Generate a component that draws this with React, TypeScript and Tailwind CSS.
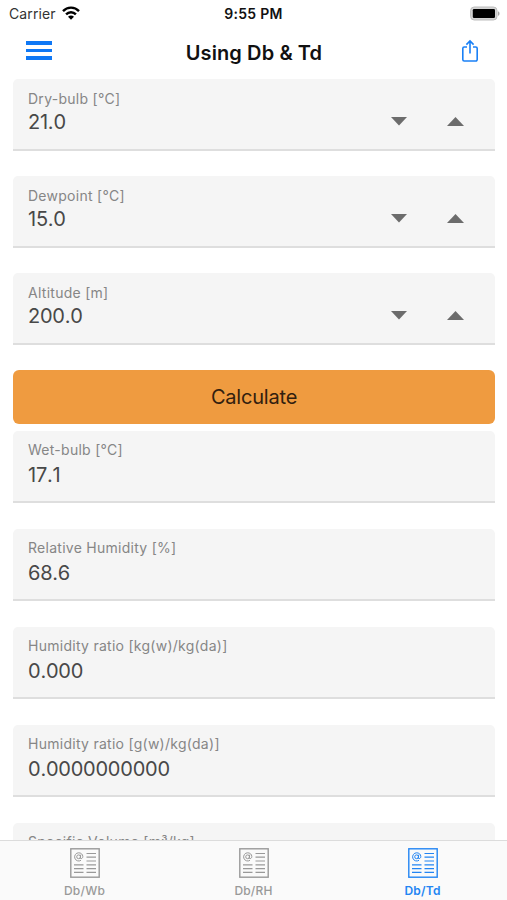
import { useState } from "react"
import clsx from "clsx"

const inputs = [
  { label: "Dry-bulb [°C]", value: 21 },
  { label: "Dewpoint [°C]", value: 15 },
  { label: "Altitude [m]", value: 200 },
]

const results = [
  { label: "Wet-bulb [°C]", value: "17.1" },
  { label: "Relative Humidity [%]", value: "68.6" },
  { label: "Humidity ratio [kg(w)/kg(da)]", value: "0.000" },
  { label: "Humidity ratio [g(w)/kg(da)]", value: "0.0000000000" },
  { label: "Specific Volume [m³/kg]", value: "" },
]

const tabs = ["Db/Wb", "Db/RH", "Db/Td"]

function StatusBar() {
  return (
    <div className="grid h-7 shrink-0 grid-cols-3 items-center pl-[9px] pr-[7px] text-[#111]">
      <div className="flex items-center gap-[6px]">
        <span className="text-[14px] leading-5 tracking-[0.1px] text-[#333]">Carrier</span>
        <svg width="18" height="14" viewBox="0 0 18 14" fill="none" stroke="#000" strokeWidth="2.4" className="-mt-[3px]">
          <path d="M1 5.1C5.4.5 12.6.5 17 5.1" />
          <path d="M4.1 8.4c2.7-2.9 7.1-2.9 9.8 0" />
          <path d="M9 13.8 6 10.7c1.7-1.7 4.3-1.7 6 0z" fill="#000" stroke="none" />
        </svg>
      </div>
      <span className="-ml-[2px] text-center text-[14px] font-semibold leading-5 tracking-[0.3px]">9:55 PM</span>
      <svg width="31" height="15" viewBox="0 0 31 15" className="-mt-px justify-self-end">
        <rect x="1.6" y="1" width="26.4" height="13" rx="3.6" fill="#d4d4d4" stroke="#bdbdbd" />
        <rect x="3.8" y="3" width="22.2" height="9" rx="1.2" fill="#000" />
        <path d="M29 5.2c2 .8 2 3.8 0 4.6z" fill="#a8a8a8" />
      </svg>
    </div>
  )
}

function Header() {
  return (
    <header className="flex h-[50px] shrink-0 items-center justify-between pl-[26px] pr-[28px]">
      <button aria-label="Menu" className="-mt-[5px] flex flex-col gap-[4px]">
        <span className="h-[3.5px] w-[26px] bg-[#0f78f5]" />
        <span className="h-[3.5px] w-[26px] bg-[#0f78f5]" />
        <span className="h-[3.5px] w-[26px] bg-[#0f78f5]" />
      </button>
      <h1 className="mr-[5px] text-[20px] font-semibold leading-6 tracking-[0.1px] text-[#111]">Using Db &amp; Td</h1>
      <button aria-label="Share" className="-mt-1">
        <svg width="18" height="24" viewBox="0 0 18 24" fill="none" stroke="#1a80f6" strokeWidth="1.6">
          <path d="M6 8H3.2A1.4 1.4 0 0 0 1.8 9.4v11.2A1.4 1.4 0 0 0 3.2 22h11.6a1.4 1.4 0 0 0 1.4-1.4V9.4A1.4 1.4 0 0 0 14.8 8H12" />
          <path d="M9 14.5V2.2M5.4 5.6 9 2l3.6 3.6" />
        </svg>
      </button>
    </header>
  )
}

type FieldProps = {
  label: string
  value: string
  onStep?: (delta: number) => void
}

function Field({ label, value, onStep }: FieldProps) {
  return (
    <div className="flex h-[72px] shrink-0 justify-between rounded-t-[5px] border-b-2 border-[#dedede] bg-[#f5f5f5] pl-[15px] pr-[31px]">
      <div className={clsx("flex flex-col", onStep ? "pt-[9.5px]" : "pt-[9px]")}>
        <span className="text-[14px] leading-5 tracking-[0.27px] text-[#868686]">{label}</span>
        <span className={clsx("text-[20px] leading-6 tracking-[-0.23px] text-[#484848] [font-kerning:none]", onStep ? "mt-[1.5px]" : "mt-[3px]")}>{value}</span>
      </div>
      {onStep && (
        <div className="flex items-start gap-[40px] pt-[38px]">
          <button aria-label={`Decrease ${label}`} onClick={() => onStep(-1)}>
            <svg width="16" height="9" viewBox="0 0 16 9" fill="#6c6c6c"><path d="M0 0h16L8 8.5z" /></svg>
          </button>
          <button aria-label={`Increase ${label}`} onClick={() => onStep(1)}>
            <svg width="17" height="9" viewBox="0 0 17 9" fill="#6c6c6c"><path d="M0 9h17L8.5 0z" /></svg>
          </button>
        </div>
      )}
    </div>
  )
}

function NewsIcon() {
  return (
    <svg width="30" height="30" viewBox="0 0 30 30" fill="none" stroke="currentColor">
      <rect x="0.8" y="0.8" width="28.4" height="28.4" strokeWidth="1.4" />
      <path d="M16.5 5.5H26M16.5 9.2H26M16.5 13H26M4 16.8h9.5M16.5 16.8H26M4 20.6h9.5M16.5 20.6H26M4 24.4h9.5M16.5 24.4H26" strokeWidth="1.2" />
      <circle cx="8.6" cy="8.8" r="1.9" />
      <path d="M10.7 6.7l-.4 3.2c-.1 1.3 2.5 1 2.5-1.4 0-2.2-1.9-3.7-4.1-3.7a4.1 4.1 0 1 0 2.3 7.5" />
    </svg>
  )
}

export default function App() {
  const [values, setValues] = useState(inputs.map((i) => i.value))
  const [active, setActive] = useState("Db/Td")

  const step = (index: number, delta: number) => {
    setValues((prev) => prev.map((v, i) => (i === index ? v + delta : v)))
  }

  return (
    <div className="flex h-[900px] w-[507px] flex-col overflow-hidden bg-white font-['Inter','Liberation_Sans',sans-serif]">
      <StatusBar />
      <Header />
      <main className="flex min-h-0 flex-1 flex-col overflow-hidden pl-[13px] pr-[12px] pt-px">
        <div className="flex flex-col gap-[25px]">
          {inputs.map((item, i) => (
            <Field key={item.label} label={item.label} value={values[i].toFixed(1)} onStep={(d) => step(i, d)} />
          ))}
        </div>
        <button className="mt-[25px] h-[54px] shrink-0 rounded-[6px] bg-[#ef9b40] text-[20px] tracking-[-0.2px] text-[#32200f]">
          Calculate
        </button>
        <div className="mt-[7px] flex flex-col gap-[26px]">
          {results.map((item) => (
            <Field key={item.label} label={item.label} value={item.value} />
          ))}
        </div>
      </main>
      <nav className="grid h-[60px] shrink-0 grid-cols-3 border-t border-[#dcdcdc] bg-[#fafafa]">
        {tabs.map((tab) => (
          <button
            key={tab}
            onClick={() => setActive(tab)}
            className={clsx("flex flex-col items-center pt-[7px]", active === tab ? "text-[#2385f3]" : "text-[#999]")}
          >
            <NewsIcon />
            <span className={clsx("mt-[5px] text-[12px] leading-4 tracking-[0.2px]", active === tab ? "font-semibold" : "font-medium")}>{tab}</span>
          </button>
        ))}
      </nav>
    </div>
  )
}
